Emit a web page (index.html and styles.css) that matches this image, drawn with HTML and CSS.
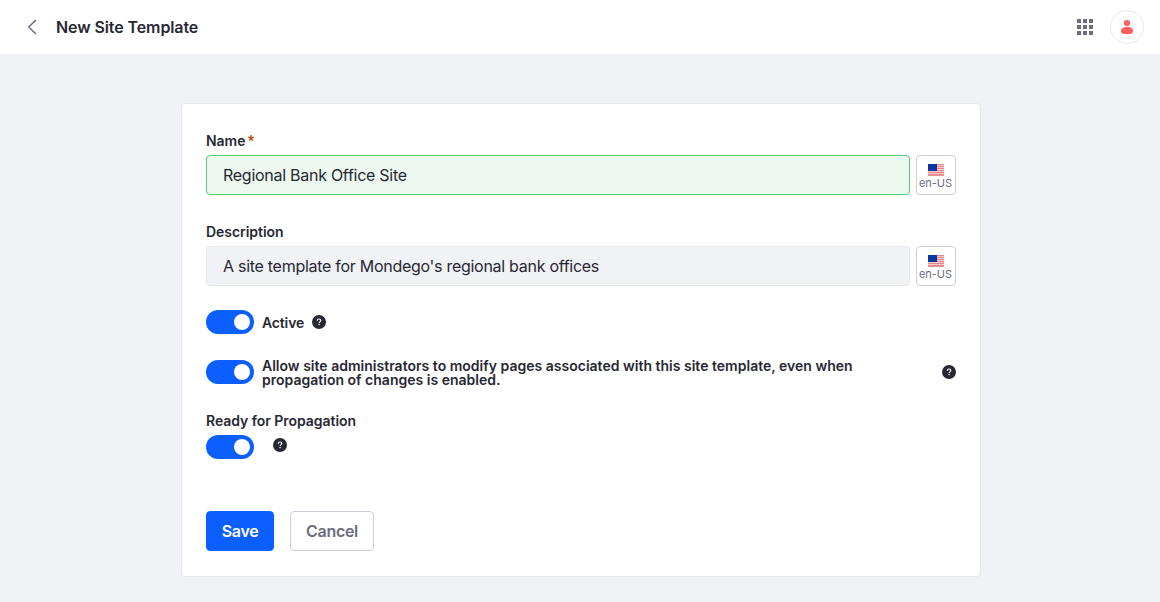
FILE: index.html
```html
<!DOCTYPE html>
<html lang="en-US">
<head>
<meta charset="utf-8">
<title>New Site Template</title>
<link rel="stylesheet" href="styles.css">
</head>
<body>
<svg class="defs" width="0" height="0" aria-hidden="true">
  <symbol id="flag" viewBox="0 0 16 12">
    <rect width="16" height="12" fill="#f6c9ca"/>
    <path d="M0 .5h16M0 2.5h16M0 4.5h16M0 6.5h16M0 8.5h16M0 10.5h16M0 11.7h16" stroke="#e4868a" stroke-width="1"/>
    <rect width="9" height="7" fill="#0a36a0"/>
  </symbol>
  <symbol id="help" viewBox="0 0 14 14">
    <circle cx="7" cy="7" r="7" fill="#272833"/>
    <path d="M5.300 5.700C5.300 4.500 6 4 7 4s1.800.6 1.800 1.500C8.800 6.700 7.100 6.600 7.100 8.100" fill="none" stroke="#fff" stroke-width="1.150"/>
    <rect x="6.450" y="8.900" width="1.300" height="1.200" fill="#fff"/>
  </symbol>
</svg>
<header class="topbar">
  <a class="back" aria-label="Back"><svg width="16" height="16" viewBox="0 0 16 16"><path d="M11.400 1.500 4.700 8l6.700 6.500" fill="none" stroke="#6b6c7e" stroke-width="1.500" stroke-linecap="round" stroke-linejoin="round"/></svg></a>
  <h1 class="title">New Site Template</h1>
  <svg class="apps" width="16" height="16" viewBox="0 0 16 16" fill="#6b6c7e"><path d="M0 0h4v4H0zM6 0h4v4H6zM12 0h4v4h-4zM0 6h4v4H0zM6 6h4v4H6zM12 6h4v4h-4zM0 12h4v4H0zM6 12h4v4H6zM12 12h4v4h-4z"/></svg>
  <span class="avatar"><svg width="14" height="16" viewBox="0 0 14 16" fill="#ff5f5f"><circle cx="7" cy="4" r="3.100"/><path d="M1 12c0-3 2.500-4 6-4s6 1 6 4c0 2-1.200 3-3 3H4c-1.800 0-3-1-3-3z"/></svg></span>
</header>
<main class="page">
  <form class="card">
    <div class="field">
      <label class="label name-label">Name <svg class="required" width="6" height="6" viewBox="0 0 6 6"><path d="M3 0v3M.2 2.100 3 3l2.800-.9M1.300 5.600 3 3l1.700 2.600" fill="none" stroke="#c2500f" stroke-width="1.400"/></svg></label>
      <div class="row">
        <div class="input valid"><span class="name-value">Regional Bank Office Site</span></div>
        <div class="locale"><svg width="16" height="12"><use href="#flag"/></svg><span>en-US</span></div>
      </div>
    </div>
    <div class="field">
      <label class="label desc-label">Description</label>
      <div class="row">
        <div class="input"><span class="desc-value">A site template for Mondego's regional bank offices</span></div>
        <div class="locale"><svg width="16" height="12"><use href="#flag"/></svg><span>en-US</span></div>
      </div>
    </div>
    <div class="option active">
      <span class="toggle"></span><span class="option-text">Active</span>
      <svg class="help" width="14" height="14"><use href="#help"/></svg>
    </div>
    <div class="option modify">
      <span class="toggle"></span><span class="option-text long">Allow site administrators to modify pages associated with this site template, even when<br>propagation of changes is enabled.</span>
      <svg class="help end" width="14" height="14"><use href="#help"/></svg>
    </div>
    <div class="label ready-label">Ready for Propagation</div>
    <div class="option ready">
      <span class="toggle"></span>
      <svg class="help" width="14" height="14"><use href="#help"/></svg>
    </div>
    <div class="actions">
      <button class="btn save" type="button"><span>Save</span></button>
      <button class="btn cancel" type="button"><span>Cancel</span></button>
    </div>
  </form>
</main>
</body>
</html>
```
FILE: styles.css
```css
* { box-sizing: border-box; }
body { margin: 0; background: #f0f1f5; color: #272833; font-family: Inter, "Liberation Sans", sans-serif; font-size: 14px; height: 602px; overflow: hidden; }
svg { display: block; flex: none; }
.defs { position: absolute; }
.topbar { height: 54px; background: #fff; display: flex; align-items: center; padding: 0 16px 0 24px; }
.back { margin-right: 16px; }
.title { margin: 0; font-size: 16px; line-height: 24px; font-weight: 600; letter-spacing: -0.1px; white-space: nowrap; }
.apps { margin-left: auto; }
.avatar { width: 34px; height: 34px; border: 1px solid #e7e7ed; border-radius: 50%; margin-left: 17px; display: flex; align-items: center; justify-content: center; }
.page { padding: 49px 179px 0 181px; }
.card { width: 800px; height: 474px; padding: 27px 24px 0; background: #fff; border: 1px solid #e7e7ed; border-radius: 4px; }
.field { margin-bottom: 24px; }
.label { display: flex; align-items: center; height: 21px; margin-bottom: 3px; font-size: 14px; font-weight: 600; line-height: 21px; letter-spacing: -0.04px; white-space: nowrap; }
.required { margin: -4px 0 0 3px; }
.row { display: flex; gap: 6px; }
.field .label { height: 18px; margin-bottom: 6px; }
.field + .field .label { height: 24px; margin-bottom: 3px; }
.input { width: 704px; height: 40px; padding: 0 16px; border: 1px solid #e7e7ed; border-radius: 4px; background: #f1f2f5; display: flex; align-items: center; font-size: 16px; white-space: nowrap; }
.name-value { letter-spacing: -0.27px; }
.desc-value { letter-spacing: -0.28px; }
.valid { border-color: #5aca75; background: #edf8f0; }
.locale { width: 40px; height: 40px; border: 1px solid #cdced9; border-radius: 4px; background: #fff; color: #6b6c7e; display: flex; flex-direction: column; align-items: center; padding-top: 8px; font-size: 11px; line-height: 14px; white-space: nowrap; }
.locale span { margin-left: -1px; }
.option { display: flex; align-items: center; }
.toggle { width: 48px; height: 24px; padding: 4px; border-radius: 12px; background: #0b5fff; display: flex; justify-content: flex-end; flex: none; }
.toggle::after { content: ""; width: 16px; height: 16px; border-radius: 50%; background: #fff; }
.option-text { margin-left: 8px; font-weight: 600; line-height: 14px; white-space: nowrap; padding-top: 2px; }
.active .option-text { letter-spacing: -0.15px; }
.long { letter-spacing: 0.01px; }
.active .help { margin-left: 8px; }
.modify { margin-top: 23px; }
.help.end { margin-left: auto; }
.ready-label { margin-top: 23px; margin-bottom: 4px; }
.ready .help { margin: -4px 0 0 19px; }
.actions { display: flex; gap: 16px; margin-top: 52px; }
.btn { height: 40px; padding: 0; border: 1px solid #0b5fff; border-radius: 4px; font: 600 16px/24px Inter, sans-serif; letter-spacing: -0.3px; white-space: nowrap; }
.save { width: 68px; background: #0b5fff; color: #fff; }
.cancel { width: 84px; background: #fff; border-color: #cdced9; color: #6b6c7e; }
```
